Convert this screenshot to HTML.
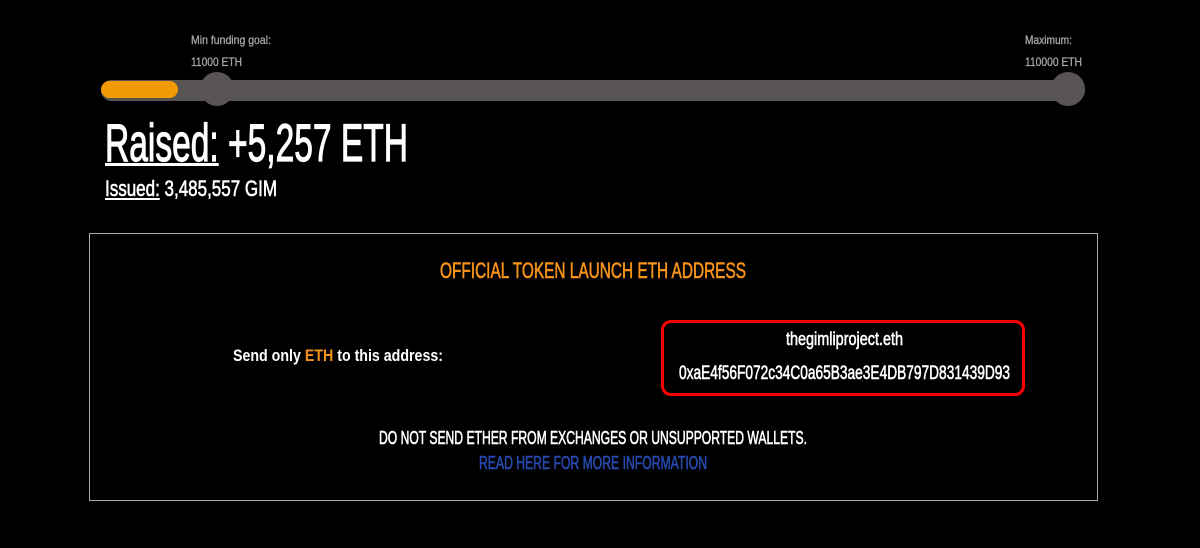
<!DOCTYPE html>
<html><head><meta charset="utf-8"><style>
html,body{margin:0;padding:0;background:#000;width:1200px;height:548px;overflow:hidden}
body{position:relative;font-family:"Liberation Sans",sans-serif;color:#fff}
.t{position:absolute;white-space:nowrap;line-height:1;transform-origin:0 0}
.s{-webkit-text-stroke:0.6px currentColor}
</style></head><body>
<div style="position:absolute;left:101px;top:80px;width:984px;height:21px;background:#595454;border-radius:11px"></div>
<div style="position:absolute;left:101px;top:81px;width:77px;height:17px;background:#f29b05;border-radius:9px"></div>
<div style="position:absolute;left:200px;top:72px;width:34px;height:34px;background:#595454;border-radius:50%"></div>
<div style="position:absolute;left:1051px;top:72px;width:34px;height:34px;background:#595454;border-radius:50%"></div>

<span class="t s" style="left:191px;top:34px;font-size:12px;color:#a8a8a8;--w:80;-webkit-text-stroke:0.3px #a8a8a8">Min funding goal:</span>
<span class="t s" style="left:191px;top:56px;font-size:12px;color:#a8a8a8;--w:51;-webkit-text-stroke:0.3px #a8a8a8">11000 ETH</span>
<span class="t s" style="left:1025px;top:34px;font-size:12px;color:#a8a8a8;--w:47;-webkit-text-stroke:0.3px #a8a8a8">Maximum:</span>
<span class="t s" style="left:1025px;top:56px;font-size:12px;color:#a8a8a8;--w:57;-webkit-text-stroke:0.3px #a8a8a8">110000 ETH</span>

<span class="t s" style="left:105px;top:117px;font-size:53px;--w:303;-webkit-text-stroke:1.2px #fff"><u style="text-decoration-thickness:3px">Raised:</u> +5,257 ETH</span>
<span class="t s" style="left:105px;top:178px;font-size:22px;--w:172"><u>Issued:</u> 3,485,557 GIM</span>

<div style="position:absolute;left:89px;top:233px;width:1007px;height:266px;border:1px solid #aaa"></div>
<span class="t s" style="left:440px;top:260px;font-size:22px;color:#f7931a;--w:306">OFFICIAL TOKEN LAUNCH ETH ADDRESS</span>
<span class="t" style="left:233px;top:347px;font-size:17px;font-weight:bold;--w:210">Send only <span style="color:#f7931a">ETH</span> to this address:</span>
<div style="position:absolute;left:661px;top:320px;width:358px;height:70px;border:3px solid #f00;border-radius:10px"></div>
<span class="t s" style="left:786px;top:330px;font-size:18px;--w:117">thegimliproject.eth</span>
<span class="t s" style="left:679px;top:364px;font-size:19px;--w:331">0xaE4f56F072c34C0a65B3ae3E4DB797D831439D93</span>
<span class="t s" style="left:379px;top:429px;font-size:18px;--w:428">DO NOT SEND ETHER FROM EXCHANGES OR UNSUPPORTED WALLETS.</span>
<span class="t s" style="left:479px;top:454px;font-size:18px;color:#2849b0;--w:228">READ HERE FOR MORE INFORMATION</span>
<script>
document.querySelectorAll('.t').forEach(function(e){
 var w=parseFloat(getComputedStyle(e).getPropertyValue('--w'));
 var r=e.getBoundingClientRect().width;
 if(w&&r)e.style.transform='scaleX('+(w/r)+')';
});
</script>
</body></html>
